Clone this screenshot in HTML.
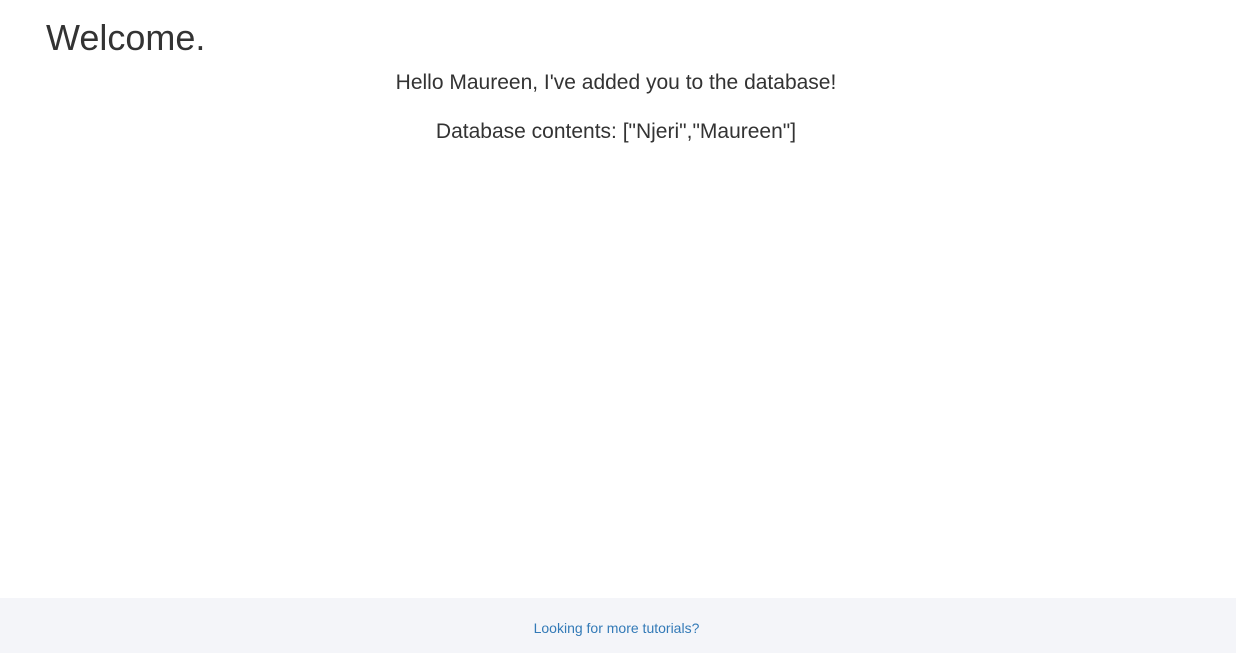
<!DOCTYPE html>
<html><head><style>
html,body{margin:0;padding:0;background:#fff;font-family:"Liberation Sans",Arial,sans-serif;color:#333;}
body{width:1236px;height:653px;position:relative;overflow:hidden;}
h1{position:absolute;left:46px;top:17px;margin:0;font-size:36px;font-weight:normal;line-height:42px;}
.p{position:absolute;left:0;width:1232px;text-align:center;font-size:21px;line-height:24px;}
.f{position:absolute;left:0;top:598px;width:1233px;padding-right:3px;height:55px;background:#f4f5f9;text-align:center;}
.f a{color:#337ab7;text-decoration:none;font-size:14px;line-height:60px;}
</style></head><body>
<h1>Welcome.</h1>
<div class="p" style="top:71px">Hello Maureen, I've added you to the database!</div>
<div class="p" style="top:120px">Database contents: ["Njeri","Maureen"]</div>
<div class="f"><a>Looking for more tutorials?</a></div>
</body></html>
